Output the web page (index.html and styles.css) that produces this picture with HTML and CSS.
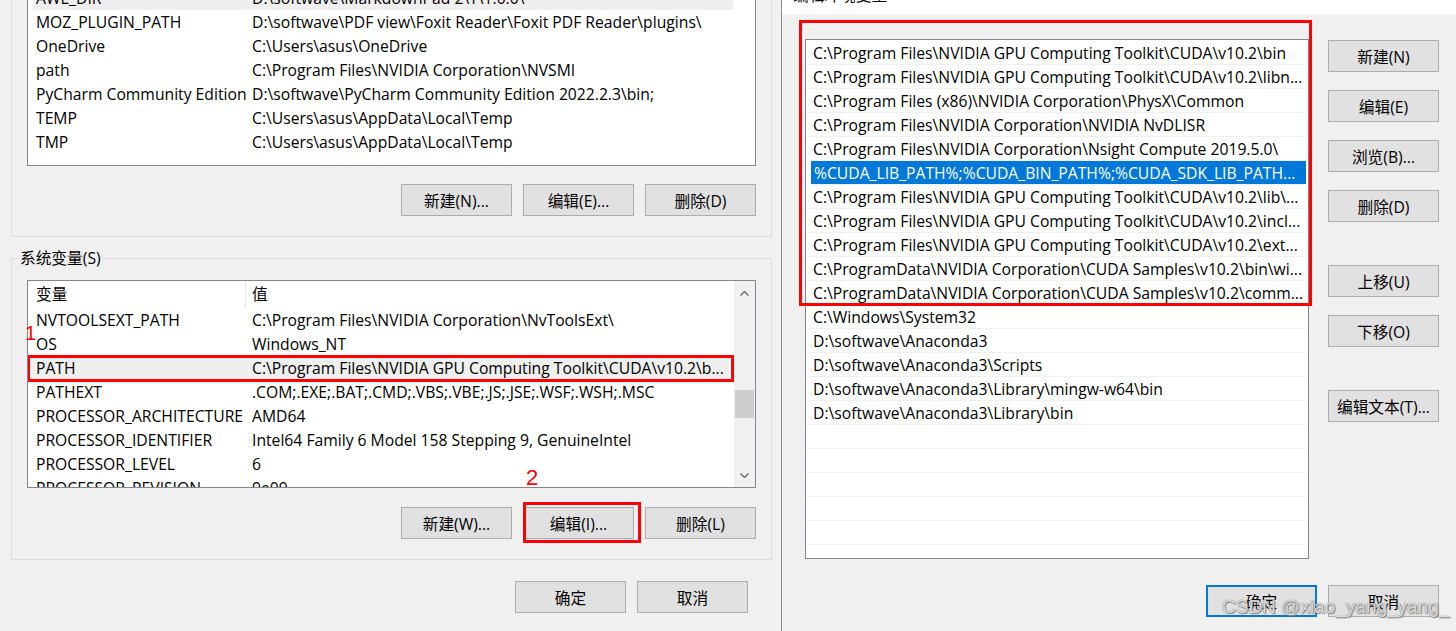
FILE: index.html
```html
<!DOCTYPE html>
<html lang="zh-CN">
  <head>
    <meta charset="UTF-8" />
    <meta name="viewport" content="width=device-width, initial-scale=1.0" />
    <title>环境变量</title>
    <link rel="stylesheet" href="styles.css">
  </head>
  <body>
    <div class="screen">
      <!-- 环境变量 dialog -->
      <div class="win win-left">
        <div class="group group-user">
          <div class="list list-user">
            <div class="row hot"><span class="c1">AWE_DIR</span><span class="c2">D:\softwave\MarkdownPad 2\T\1.0.0\</span></div>
            <div class="row"><span class="c1">MOZ_PLUGIN_PATH</span><span class="c2">D:\softwave\PDF view\Foxit Reader\Foxit PDF Reader\plugins\</span></div>
            <div class="row"><span class="c1">OneDrive</span><span class="c2">C:\Users\asus\OneDrive</span></div>
            <div class="row"><span class="c1">path</span><span class="c2">C:\Program Files\NVIDIA Corporation\NVSMI</span></div>
            <div class="row"><span class="c1">PyCharm Community Edition</span><span class="c2">D:\softwave\PyCharm Community Edition 2022.2.3\bin;</span></div>
            <div class="row"><span class="c1">TEMP</span><span class="c2">C:\Users\asus\AppData\Local\Temp</span></div>
            <div class="row"><span class="c1">TMP</span><span class="c2">C:\Users\asus\AppData\Local\Temp</span></div>
          </div>
          <div class="btns">
            <button class="btn">新建(N)...</button>
            <button class="btn">编辑(E)...</button>
            <button class="btn">删除(D)</button>
          </div>
        </div>

        <div class="group group-sys">
          <div class="legend">系统变量(S)</div>
          <div class="list list-sys">
            <div class="list-body">
              <div class="row head"><span class="c1">变量</span><span class="c2">值</span></div>
              <div class="row"><span class="c1">NVTOOLSEXT_PATH</span><span class="c2">C:\Program Files\NVIDIA Corporation\NvToolsExt\</span></div>
              <div class="row"><span class="c1">OS</span><span class="c2">Windows_NT</span></div>
              <div class="row hot marked"><span class="c1">PATH</span><span class="c2">C:\Program Files\NVIDIA GPU Computing Toolkit\CUDA\v10.2\b...</span></div>
              <div class="row"><span class="c1">PATHEXT</span><span class="c2">.COM;.EXE;.BAT;.CMD;.VBS;.VBE;.JS;.JSE;.WSF;.WSH;.MSC</span></div>
              <div class="row"><span class="c1">PROCESSOR_ARCHITECTURE</span><span class="c2">AMD64</span></div>
              <div class="row"><span class="c1">PROCESSOR_IDENTIFIER</span><span class="c2">Intel64 Family 6 Model 158 Stepping 9, GenuineIntel</span></div>
              <div class="row"><span class="c1">PROCESSOR_LEVEL</span><span class="c2">6</span></div>
              <div class="row"><span class="c1">PROCESSOR_REVISION</span><span class="c2">9e09</span></div>
            </div>
            <div class="scrollbar">
              <div class="sb-btn">
                <svg width="9" height="5" viewBox="0 0 9 5"><polyline points="0.5,4.5 4.5,0.5 8.5,4.5" fill="none" stroke="#606060" stroke-width="1.2"/></svg>
              </div>
              <div class="sb-thumb"></div>
              <div class="sb-btn sb-down">
                <svg width="9" height="5" viewBox="0 0 9 5"><polyline points="0.5,0.5 4.5,4.5 8.5,0.5" fill="none" stroke="#606060" stroke-width="1.2"/></svg>
              </div>
            </div>
          </div>
          <div class="btns">
            <button class="btn">新建(W)...</button>
            <button class="btn marked">编辑(I)...</button>
            <button class="btn">删除(L)</button>
          </div>
        </div>

        <div class="btns dialog-btns">
          <button class="btn">确定</button>
          <button class="btn">取消</button>
        </div>

        <span class="mark mark-1">1</span>
        <span class="mark mark-2">2</span>
      </div>

      <!-- 编辑环境变量 dialog -->
      <div class="win win-right">
        <div class="titlebar"><span>编辑环境变量</span></div>
        <div class="edit-body">
          <div class="path-list">
            <div class="prow">C:\Program Files\NVIDIA GPU Computing Toolkit\CUDA\v10.2\bin</div>
            <div class="prow">C:\Program Files\NVIDIA GPU Computing Toolkit\CUDA\v10.2\libn...</div>
            <div class="prow">C:\Program Files (x86)\NVIDIA Corporation\PhysX\Common</div>
            <div class="prow">C:\Program Files\NVIDIA Corporation\NVIDIA NvDLISR</div>
            <div class="prow">C:\Program Files\NVIDIA Corporation\Nsight Compute 2019.5.0\</div>
            <div class="prow sel">%CUDA_LIB_PATH%;%CUDA_BIN_PATH%;%CUDA_SDK_LIB_PATH...</div>
            <div class="prow">C:\Program Files\NVIDIA GPU Computing Toolkit\CUDA\v10.2\lib\...</div>
            <div class="prow">C:\Program Files\NVIDIA GPU Computing Toolkit\CUDA\v10.2\incl...</div>
            <div class="prow">C:\Program Files\NVIDIA GPU Computing Toolkit\CUDA\v10.2\ext...</div>
            <div class="prow">C:\ProgramData\NVIDIA Corporation\CUDA Samples\v10.2\bin\wi...</div>
            <div class="prow">C:\ProgramData\NVIDIA Corporation\CUDA Samples\v10.2\comm...</div>
            <div class="prow">C:\Windows\System32</div>
            <div class="prow">D:\softwave\Anaconda3</div>
            <div class="prow">D:\softwave\Anaconda3\Scripts</div>
            <div class="prow">D:\softwave\Anaconda3\Library\mingw-w64\bin</div>
            <div class="prow">D:\softwave\Anaconda3\Library\bin</div>
            <div class="prow"></div>
            <div class="prow"></div>
            <div class="prow"></div>
            <div class="prow"></div>
            <div class="prow"></div>
            <div class="red-frame"></div>
          </div>
          <div class="side">
            <button class="btn">新建(N)</button>
            <button class="btn">编辑(E)</button>
            <button class="btn">浏览(B)...</button>
            <button class="btn">删除(D)</button>
            <button class="btn gap-big">上移(U)</button>
            <button class="btn">下移(O)</button>
            <button class="btn gap-big">编辑文本(T)...</button>
          </div>
        </div>
        <div class="btns dialog-btns">
          <button class="btn default">确定</button>
          <button class="btn">取消</button>
        </div>
        <div class="watermark">CSDN @xiao_yang_yang_</div>
      </div>
    </div>
  </body>
</html>
```

FILE: styles.css
```css
body {
  margin: 0;
  font-family: "Open Sans", "Noto Sans CJK SC", sans-serif;
  font-size: 15.7px;
  color: #000;
  background-color: #f0f0f0;
  overflow: hidden;
}
.screen {
  display: flex;
  height: 631px;
}

/* left dialog */
.win-left {
  width: 781px;
  flex: none;
  box-sizing: border-box;
  padding: 0 9px 0 11px;
  position: relative;
  overflow: hidden;
}
.group {
  width: 761px;
  box-sizing: border-box;
  border: 1px solid #dcdcdc;
  padding: 24px 15px 20px;
}
.group-user {
  margin-top: -40px;
}
.group-sys {
  margin-top: 21px;
  padding-top: 0;
}
.legend {
  width: fit-content;
  margin: -11px 0 0 -8px;
  padding: 0 1px;
  line-height: 20px;
  background-color: #f0f0f0;
}
.list {
  box-sizing: border-box;
  border: 1px solid #828790;
  background-color: #fff;
  overflow: hidden;
}
.list-user {
  height: 181px;
}
.list-sys {
  height: 208px;
  margin-top: 12px;
  display: flex;
}
.list-body {
  flex: 1;
  overflow: hidden;
}
.row {
  display: flex;
  height: 24px;
  line-height: 24px;
  white-space: nowrap;
}
.row.hot {
  background: linear-gradient(#efefef, #efefef) 5px 0 / 700px 100% no-repeat;
}
.list-sys .row.hot {
  background-position: 1px 0;
}
.row.marked {
  position: relative;
}
.row.marked::after {
  content: "";
  position: absolute;
  top: -1px;
  bottom: -2px;
  left: -1px;
  right: 0;
  border: 3px solid #f00;
}
.c1 {
  flex: none;
  width: 224px;
  box-sizing: border-box;
  padding-left: 8px;
  overflow: hidden;
}
.c2 {
  flex: 1;
  overflow: hidden;
}
.row.head {
  height: 27px;
  line-height: 27px;
}
.head .c1 {
  width: 218px;
  border-right: 1px solid #e5e5e5;
}
.head .c2 {
  padding-left: 6px;
}

.scrollbar {
  width: 21px;
  flex: none;
  display: flex;
  flex-direction: column;
  background-color: #f0f0f0;
}
.sb-btn {
  height: 24px;
  display: flex;
  align-items: center;
  justify-content: center;
}
.sb-thumb {
  height: 28px;
  margin: 85px 1px 0;
  background-color: #cdcdcd;
}
.sb-down {
  margin-top: auto;
}

.btns {
  display: flex;
  justify-content: flex-end;
  gap: 11px;
  margin-top: 18px;
}
.group-sys .btns {
  margin-top: 19px;
}
.btn {
  width: 111px;
  height: 32px;
  box-sizing: border-box;
  padding: 0;
  border: 1px solid #adadad;
  background-color: #e1e1e1;
  font: inherit;
  color: #000;
  white-space: nowrap;
}
.btn.marked {
  position: relative;
}
.btn.marked::after {
  content: "";
  position: absolute;
  top: -6px;
  bottom: -5px;
  left: -1px;
  right: -8px;
  border: 3px solid #f00;
}
.win-left .dialog-btns {
  margin-top: 21px;
  padding-right: 24px;
}

.mark {
  position: absolute;
  color: #f00;
  font-family: "Liberation Sans", sans-serif;
  line-height: 1;
}
.mark-1 {
  left: 25px;
  top: 323px;
  font-size: 20px;
}
.mark-2 {
  left: 526px;
  top: 467px;
  font-size: 22px;
}

/* right dialog */
.win-right {
  flex: 1;
  border-left: 1px solid #8b8b8b;
  position: relative;
  display: flex;
  flex-direction: column;
}
.titlebar {
  height: 14px;
  background-color: #fff;
  overflow: hidden;
  padding-left: 11px;
}
.titlebar span {
  display: block;
  margin-top: -15px;
  line-height: 20px;
}
.edit-body {
  display: flex;
  margin-top: 25px;
  padding-left: 23px;
}
.path-list {
  width: 504px;
  height: 520px;
  box-sizing: border-box;
  border: 1px solid #828790;
  padding-top: 1px;
  background-color: #fff;
  position: relative;
}
.prow {
  height: 24px;
  box-sizing: border-box;
  margin: 0 2px 0 1px;
  padding-left: 6px;
  line-height: 24px;
  border-bottom: 1px solid #f0f0f0;
  white-space: nowrap;
  overflow: hidden;
}
.prow.sel {
  margin-left: 5px;
  padding-left: 3px;
  background-color: #0078d7;
  color: #fff;
}
.red-frame {
  position: absolute;
  top: -20px;
  left: -7px;
  width: 513px;
  height: 286px;
  box-sizing: border-box;
  border: 3px solid #f00;
}
.side {
  display: flex;
  flex-direction: column;
  gap: 18px;
  margin-left: 19px;
  padding-top: 1px;
}
.gap-big {
  margin-top: 25px;
}
.win-right .dialog-btns {
  margin-top: 26px;
  padding-right: 17px;
}
.btn.default {
  border: 2px solid #0078d7;
}
.watermark {
  position: absolute;
  left: 440px;
  top: 596px;
  font-family: "Liberation Sans", sans-serif;
  font-size: 19px;
  color: rgba(236, 236, 236, 0.9);
  text-shadow: 0 0 1px #555, 1px 1px 1px #888;
}
```
